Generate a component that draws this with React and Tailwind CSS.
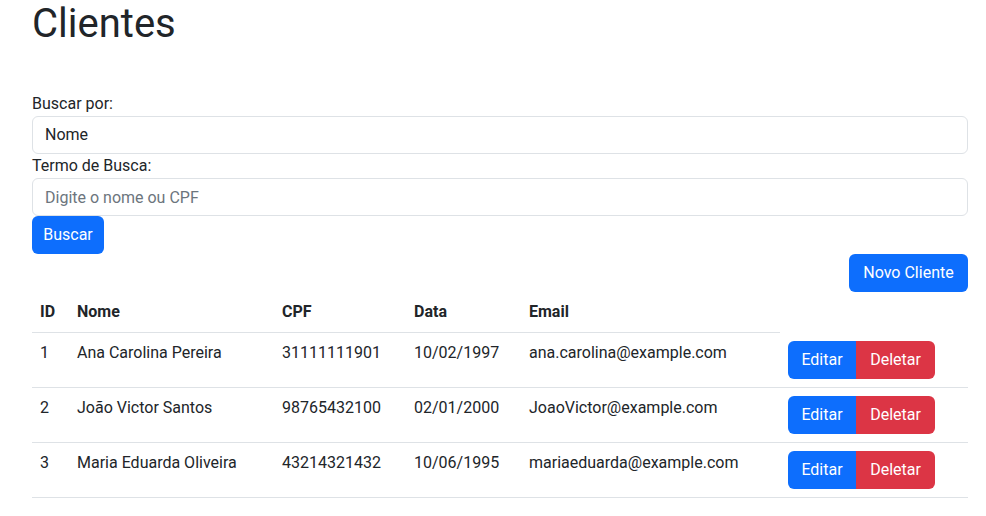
import React, { useState } from 'react';

const clientes = [
  { id: 1, nome: 'Ana Carolina Pereira', cpf: '31111111901', data: '10/02/1997', email: 'ana.carolina@example.com' },
  { id: 2, nome: 'João Victor Santos', cpf: '98765432100', data: '02/01/2000', email: 'JoaoVictor@example.com' },
  { id: 3, nome: 'Maria Eduarda Oliveira', cpf: '43214321432', data: '10/06/1995', email: 'mariaeduarda@example.com' },
];

const App = () => {
  const [campo, setCampo] = useState('nome');
  const [termo, setTermo] = useState('');

  return (
    <div className="bg-white pl-8 pr-[18px] font-['Roboto','Liberation_Sans',sans-serif] text-base leading-6 text-[#212529]">
      <h1 className="mb-[45px] text-[40px] font-normal leading-[47px]">Clientes</h1>

      {/* Search form */}
      <div className="flex flex-col">
        <label className="block">Buscar por:</label>
        <select
          value={campo}
          onChange={(e) => setCampo(e.target.value)}
          className="h-[38px] w-full appearance-none rounded-md border border-[#dee2e6] bg-white px-3 text-[#212529] outline-none"
        >
          <option value="nome">Nome</option>
          <option value="cpf">CPF</option>
        </select>
        <label className="block">Termo de Busca:</label>
        <input
          type="text"
          value={termo}
          onChange={(e) => setTermo(e.target.value)}
          placeholder="Digite o nome ou CPF"
          className="h-[38px] w-full rounded-md border border-[#dee2e6] bg-white px-3 text-[#212529] outline-none placeholder:text-[#6c757d]"
        />
        <div>
          <button className="h-[38px] w-[72px] rounded-md bg-[#0d6efd] text-center text-white">Buscar</button>
        </div>
      </div>

      <div className="flex justify-end">
        <button className="h-[38px] w-[119px] rounded-md bg-[#0d6efd] text-center text-white">Novo Cliente</button>
      </div>

      {/* Table */}
      <table className="w-full table-fixed border-collapse text-left">
        <thead>
          <tr>
            <th className="w-[37px] border-b border-[#dee2e6] px-2 py-2 font-bold">ID</th>
            <th className="w-[205px] border-b border-[#dee2e6] px-2 py-2 font-bold">Nome</th>
            <th className="w-[132px] border-b border-[#dee2e6] px-2 py-2 font-bold">CPF</th>
            <th className="w-[115px] border-b border-[#dee2e6] px-2 py-2 font-bold">Data</th>
            <th className="w-[259px] border-b border-[#dee2e6] px-2 py-2 font-bold">Email</th>
          </tr>
        </thead>
        <tbody>
          {clientes.map((c) => (
            <tr key={c.id} className="border-b border-[#dee2e6]">
              <td className="px-2 py-2 align-top">{c.id}</td>
              <td className="px-2 py-2 align-top">{c.nome}</td>
              <td className="px-2 py-2 align-top">{c.cpf}</td>
              <td className="px-2 py-2 align-top">{c.data}</td>
              <td className="px-2 py-2 align-top">{c.email}</td>
              <td className="px-2 py-2 align-top">
                <div className="flex">
                  <button className="h-[38px] w-[68px] rounded-l-md bg-[#0d6efd] text-center text-white">Editar</button>
                  <button className="h-[38px] w-[79px] rounded-r-md bg-[#dc3545] text-center text-white">Deletar</button>
                </div>
              </td>
            </tr>
          ))}
        </tbody>
      </table>
    </div>
  );
};

export default App;
